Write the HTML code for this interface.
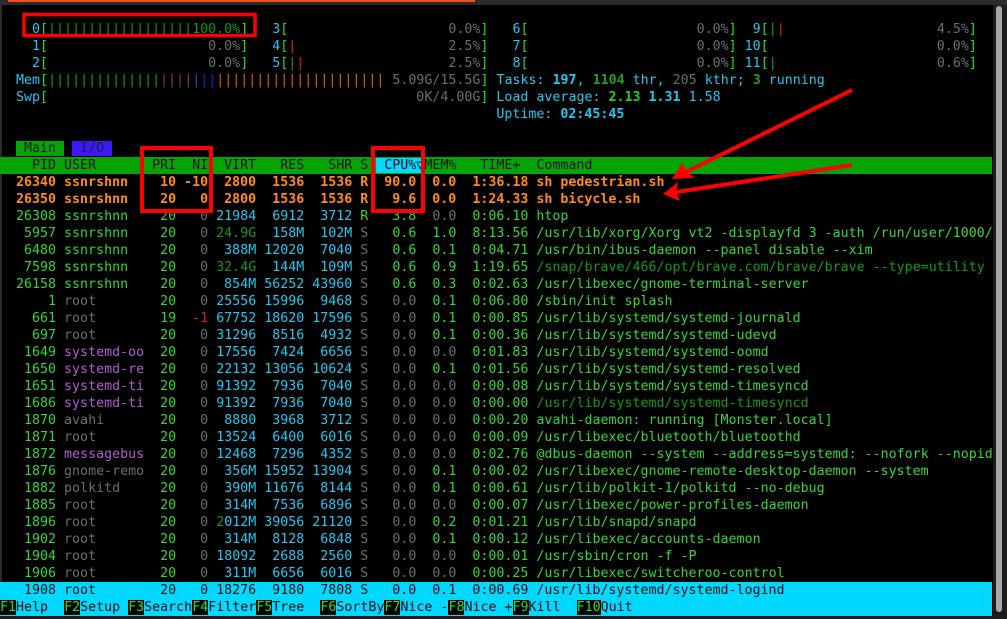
<!DOCTYPE html>
<html><head><meta charset="utf-8"><style>
html,body{margin:0;padding:0;}
body{width:1007px;height:619px;background:#000;position:relative;overflow:hidden;font-family:"DejaVu Sans Mono","Liberation Mono",monospace;font-size:13.3px;}
#top{position:absolute;left:0;top:0;width:1007px;height:5px;background:#2b2b2b;}
#orange{position:absolute;left:8px;top:0;width:467px;height:2px;background:#e95420;}
#lft{position:absolute;left:0;top:5px;width:2px;height:614px;background:#2a2a2a;}
#bot{position:absolute;left:0;top:615px;width:1007px;height:4px;background:#1e1e1e;}
#track{position:absolute;left:993px;top:5px;width:14px;height:614px;background:#1c1c1c;}
#thumb{position:absolute;left:996px;top:6px;width:6px;height:606px;background:#a8a8a8;border-radius:3px;}
#term{position:absolute;left:0;top:20.5px;width:992px;}
.l{height:17.03px;line-height:17px;white-space:pre;overflow:hidden;width:992px;color:#33d633;}
.g{color:#33d633}.dg{color:#139a13}.c{color:#20c8f0}.gr{color:#6c6c6c}.o{color:#ff8c1a;font-weight:bold}
.p{color:#b25ad0}.r{color:#d42020}.b{color:#22e022}.bc{color:#20c8f0;font-weight:bold}.bg{color:#22d022;font-weight:bold}
.hdr{background:#04a404;color:#111;}
.sel{background:#00d8ff;color:#111;}
.sel span{color:#111}
.tm{background:#04a404;color:#222}.ti{background:#3c18ff;color:#222}
.cpuh{background:#00d8ff}
.fk{background:#000;color:#22e022}.fd{background:#00d8ff;color:#111}
</style></head><body>
<div id="top"></div><div id="orange"></div><div id="lft"></div>
<div id="track"></div><div id="thumb"></div><div id="bot"></div>
<div id="term">
<div class="l"><span class="c">    0</span><span class="b">[</span><span class="dg">||||||||||||||||||100.0%</span><span class="b">]</span>   <span class="c">3</span><span class="b">[</span><span class="gr">                    0.0%</span><span class="b">]</span>   <span class="c">6</span><span class="b">[</span><span class="gr">                     0.0%</span><span class="b">]</span>  <span class="c">9</span><span class="b">[</span><span class="dg">|</span><span class="r">|</span><span class="gr">                   4.5%</span><span class="b">]</span></div>
<div class="l"><span class="c">    1</span><span class="b">[</span><span class="gr">                    0.0%</span><span class="b">]</span>   <span class="c">4</span><span class="b">[</span><span class="r">|</span><span class="gr">                   2.5%</span><span class="b">]</span>   <span class="c">7</span><span class="b">[</span><span class="gr">                     0.0%</span><span class="b">]</span> <span class="c">10</span><span class="b">[</span><span class="gr">                     0.0%</span><span class="b">]</span></div>
<div class="l"><span class="c">    2</span><span class="b">[</span><span class="gr">                    0.0%</span><span class="b">]</span>   <span class="c">5</span><span class="b">[</span><span class="dg">|</span><span class="r">|</span><span class="gr">                  2.5%</span><span class="b">]</span>   <span class="c">8</span><span class="b">[</span><span class="gr">                     0.0%</span><span class="b">]</span> <span class="c">11</span><span class="b">[</span><span class="dg">|</span><span class="gr">                    0.6%</span><span class="b">]</span></div>
<div class="l">  <span class="c">Mem</span><span class="b">[</span><span class="dg">||||||||||||||</span><span style="color:#8a3050">|</span><span style="color:#7a3a90">|</span><span style="color:#8a3050">|</span><span style="color:#7a3a90">|</span><span style="color:#6a30b0">|</span><span style="color:#3a18e0">|</span><span style="color:#3a18e0">|</span><span style="color:#e06010">|||||||||||||||||||||</span><span class="gr"> 5.09G/15.5G</span><span class="b">]</span> <span class="c">Tasks: </span><span class="bc">197</span><span class="c">, </span><span class="bg" style="color:#1aa01a">1104</span><span class="c"> thr, </span><span class="gr">205</span><span class="c"> kthr; </span><span class="bg" style="color:#1aa01a">3</span><span class="c"> running</span></div>
<div class="l">  <span class="c">Swp</span><span class="b">[</span><span class="gr">                                              0K/4.00G</span><span class="b">]</span> <span class="c">Load average: </span><span class="bg">2.13</span> <span class="bc">1.31</span> <span class="c">1.58</span></div>
<div class="l">                                                              <span class="c">Uptime: </span><span class="bc">02:45:45</span></div>
<div class="l"> </div>
<div class="l">  <span class="tm"> Main </span> <span class="ti"> I/O </span></div>
<div class="l hdr">    PID USER       PRI  NI  VIRT   RES   SHR S <span class="cpuh"> CPU%▽</span>MEM%   TIME+  Command</div>
<div class="l o">  26340 ssnrshnn    10 -10  2800  1536  1536 R  90.0  0.0  1:36.18 sh pedestrian.sh</div>
<div class="l o">  26350 ssnrshnn    20   0  2800  1536  1536 R   9.6  0.0  1:24.33 sh bicycle.sh</div>
<div class="l">  26308 ssnrshnn    20 <span class="gr">  0</span> <span class="c">21984  6912  3712</span> R   3.8 <span class="gr"> 0.0</span>  0:06.10 htop</div>
<div class="l">   5957 ssnrshnn    20 <span class="gr">  0</span> <span class="dg">24.9G</span> <span class="c"> 158M  102M</span> <span class="gr">S</span>   0.6  1.0  8:13.56 /usr/lib/xorg/Xorg vt2 -displayfd 3 -auth /run/user/1000/gdm/Xauthority</div>
<div class="l">   6480 ssnrshnn    20 <span class="gr">  0</span> <span class="c"> 388M 12020  7040</span> <span class="gr">S</span>   0.6  0.1  0:04.71 /usr/bin/ibus-daemon --panel disable --xim</div>
<div class="l">   7598 ssnrshnn    20 <span class="gr">  0</span> <span class="dg">32.4G</span> <span class="c"> 144M  109M</span> <span class="gr">S</span>   0.6  0.9  1:19.65 <span class="dg">/snap/brave/466/opt/brave.com/brave/brave --type=utility</span></div>
<div class="l">  26158 ssnrshnn    20 <span class="gr">  0</span> <span class="c"> 854M 56252 43960</span> <span class="gr">S</span>   0.6  0.3  0:02.63 /usr/libexec/gnome-terminal-server</div>
<div class="l">      1 <span class="gr">root      </span>  20 <span class="gr">  0</span> <span class="c">25556 15996  9468</span> <span class="gr">S   0.0</span>  0.1  0:06.80 /sbin/init splash</div>
<div class="l">    661 <span class="gr">root      </span>  19 <span class="r"> -1</span> <span class="c">67752 18620 17596</span> <span class="gr">S   0.0</span>  0.1  0:00.85 /usr/lib/systemd/systemd-journald</div>
<div class="l">    697 <span class="gr">root      </span>  20 <span class="gr">  0</span> <span class="c">31296  8516  4932</span> <span class="gr">S   0.0</span>  0.1  0:00.36 /usr/lib/systemd/systemd-udevd</div>
<div class="l">   1649 <span class="p">systemd-oo</span>  20 <span class="gr">  0</span> <span class="c">17556  7424  6656</span> <span class="gr">S   0.0  0.0</span>  0:01.83 /usr/lib/systemd/systemd-oomd</div>
<div class="l">   1650 <span class="p">systemd-re</span>  20 <span class="gr">  0</span> <span class="c">22132 13056 10624</span> <span class="gr">S   0.0</span>  0.1  0:01.56 /usr/lib/systemd/systemd-resolved</div>
<div class="l">   1651 <span class="p">systemd-ti</span>  20 <span class="gr">  0</span> <span class="c">91392  7936  7040</span> <span class="gr">S   0.0  0.0</span>  0:00.08 /usr/lib/systemd/systemd-timesyncd</div>
<div class="l">   1686 <span class="p">systemd-ti</span>  20 <span class="gr">  0</span> <span class="c">91392  7936  7040</span> <span class="gr">S   0.0  0.0</span>  0:00.00 <span class="dg">/usr/lib/systemd/systemd-timesyncd</span></div>
<div class="l">   1870 <span class="gr">avahi     </span>  20 <span class="gr">  0</span> <span class="c"> 8880  3968  3712</span> <span class="gr">S   0.0  0.0</span>  0:00.20 avahi-daemon: running [Monster.local]</div>
<div class="l">   1871 <span class="gr">root      </span>  20 <span class="gr">  0</span> <span class="c">13524  6400  6016</span> <span class="gr">S   0.0  0.0</span>  0:00.09 /usr/libexec/bluetooth/bluetoothd</div>
<div class="l">   1872 <span class="p">messagebus</span>  20 <span class="gr">  0</span> <span class="c">12468  7296  4352</span> <span class="gr">S   0.0  0.0</span>  0:02.76 @dbus-daemon --system --address=systemd: --nofork --nopidfile</div>
<div class="l">   1876 <span class="gr">gnome-remo</span>  20 <span class="gr">  0</span> <span class="c"> 356M 15952 13904</span> <span class="gr">S   0.0</span>  0.1  0:00.02 /usr/libexec/gnome-remote-desktop-daemon --system</div>
<div class="l">   1882 <span class="gr">polkitd   </span>  20 <span class="gr">  0</span> <span class="c"> 390M 11676  8144</span> <span class="gr">S   0.0</span>  0.1  0:00.61 /usr/lib/polkit-1/polkitd --no-debug</div>
<div class="l">   1885 <span class="gr">root      </span>  20 <span class="gr">  0</span> <span class="c"> 314M  7536  6896</span> <span class="gr">S   0.0  0.0</span>  0:00.07 /usr/libexec/power-profiles-daemon</div>
<div class="l">   1896 <span class="gr">root      </span>  20 <span class="gr">  0</span> <span class="dg">2</span><span class="c">012M 39056 21120</span> <span class="gr">S   0.0</span>  0.2  0:01.21 /usr/lib/snapd/snapd</div>
<div class="l">   1902 <span class="gr">root      </span>  20 <span class="gr">  0</span> <span class="c"> 314M  8128  6848</span> <span class="gr">S   0.0</span>  0.1  0:00.12 /usr/libexec/accounts-daemon</div>
<div class="l">   1904 <span class="gr">root      </span>  20 <span class="gr">  0</span> <span class="c">18092  2688  2560</span> <span class="gr">S   0.0  0.0</span>  0:00.01 /usr/sbin/cron -f -P</div>
<div class="l">   1906 <span class="gr">root      </span>  20 <span class="gr">  0</span> <span class="c"> 311M  6656  6016</span> <span class="gr">S   0.0  0.0</span>  0:00.25 /usr/libexec/switcheroo-control</div>
<div class="l sel">   1908 root        20   0 18276  9180  7808 S   0.0  0.1  0:00.69 /usr/lib/systemd/systemd-logind</div>
<div class="l" style="background:#00d8ff"><span class="fk">F1</span><span class="fd">Help  </span><span class="fk">F2</span><span class="fd">Setup </span><span class="fk">F3</span><span class="fd">Search</span><span class="fk">F4</span><span class="fd">Filter</span><span class="fk">F5</span><span class="fd">Tree  </span><span class="fk">F6</span><span class="fd">SortBy</span><span class="fk">F7</span><span class="fd">Nice -</span><span class="fk">F8</span><span class="fd">Nice +</span><span class="fk">F9</span><span class="fd">Kill  </span><span class="fk">F10</span><span class="fd">Quit</span></div>
</div>
<svg width="1007" height="619" style="position:absolute;left:0;top:0" xmlns="http://www.w3.org/2000/svg">
<g fill="none" stroke="#ff0000" stroke-width="4">
<rect x="24" y="14.5" width="231" height="21" stroke-width="3.5"/>
<rect x="142" y="148" width="69" height="63"/>
<rect x="373" y="148" width="50" height="63"/>
<line x1="852" y1="90" x2="680" y2="175"/>
<line x1="852" y1="165" x2="670" y2="193"/>
</g>
<g fill="#ff0000">
<polygon points="672,179 682,163 686,170 694,178"/>
<polygon points="663,194 678,182 676,192 680,201"/>
</g>
</svg>
</body></html>
